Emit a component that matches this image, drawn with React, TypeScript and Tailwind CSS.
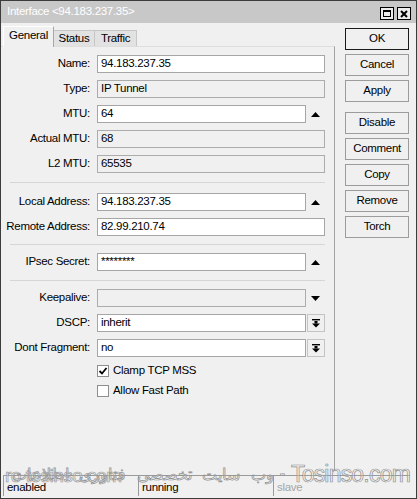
import React from "react";

const ui = "font-['Liberation_Sans',Arial,sans-serif]";

function Field({
  label,
  value,
  disabled,
  short,
  suffix,
}: {
  label: string;
  value?: string;
  disabled?: boolean;
  short?: boolean;
  suffix?: React.ReactNode;
}) {
  return (
    <div className="flex items-center h-[18px]">
      <div className="w-[90px] text-right pr-px leading-none whitespace-nowrap">{label}</div>
      <div
        className={`ml-[6px] h-[18px] border flex items-center px-[3px] leading-none whitespace-nowrap ${
          short ? "w-[209px]" : "w-[228px]"
        } ${disabled ? "bg-[#f0f0f0] border-[#acacac]" : "bg-white border-[#a6a6a6]"}`}
      >
        {value}
      </div>
      {suffix}
    </div>
  );
}

function UpArrow() {
  return (
    <svg width="19" height="18" viewBox="0 0 19 18" className="shrink-0">
      <polygon points="5,12 14,12 9.5,7" fill="#000" />
    </svg>
  );
}

function DownArrow() {
  return (
    <svg width="19" height="18" viewBox="0 0 19 18" className="shrink-0">
      <polygon points="5,7 14,7 9.5,12" fill="#000" />
    </svg>
  );
}

function DropButton() {
  return (
    <div className="ml-px w-[18px] h-[18px] border border-[#c4c4c4] bg-[#f0f0f0] flex items-center justify-center shrink-0">
      <svg width="10" height="10" viewBox="0 0 10 10">
        <rect x="1" y="1" width="8" height="1.4" fill="#000" />
        <rect x="3.5" y="3" width="3" height="2.5" fill="#000" />
        <polygon points="1,5.5 9,5.5 5,9.5" fill="#000" />
      </svg>
    </div>
  );
}

function Separator({ top, bottom }: { top: string; bottom: string }) {
  return <div className={`ml-[9px] w-[315px] h-px bg-[#d6d6d6] ${top} ${bottom}`} />;
}

function Check({ label, checked }: { label: string; checked?: boolean }) {
  return (
    <div className="flex items-center h-[12px] pl-[96px]">
      <div className="w-[12px] h-[12px] border border-[#8f8f8f] bg-white flex items-center justify-center">
        {checked && (
          <svg width="10" height="10" viewBox="0 0 10 10">
            <polyline points="1.5,5 4,7.5 8.5,2" fill="none" stroke="#000" strokeWidth="1.8" />
          </svg>
        )}
      </div>
      <span className="ml-[4px] leading-none">{label}</span>
    </div>
  );
}

function Btn({ label, strong }: { label: string; strong?: boolean }) {
  return (
    <div
      className={`w-[64px] h-[22px] flex items-center justify-center border bg-[#f0f0f0] leading-none ${
        strong ? "border-[#1a1a1a]" : "border-[#9c9c9c]"
      }`}
    >
      {label}
    </div>
  );
}

export default function App() {
  return (
    <div
      className={`${ui} text-[11.5px] tracking-[-0.3px] text-black w-[417px] h-[499px] bg-[#f0f0f0] border border-[#3c3c3c] flex flex-col relative overflow-hidden`}
    >
      {/* Title bar */}
      <div className="h-[22px] bg-[#c8c8c8] flex items-center pl-[6px] pr-[5px] shrink-0">
        <span className="text-white text-[11.5px] leading-none">Interface &lt;94.183.237.35&gt;</span>
        <div className="ml-auto flex gap-[3px] mt-[3px]">
          <div className="w-[14px] h-[13px] border border-black bg-[#ededed] flex items-center justify-center">
            <div className="w-[8px] h-[7px] border border-black border-t-2" />
          </div>
          <div className="w-[14px] h-[13px] border border-black bg-[#ededed] flex items-center justify-center">
            <svg width="8" height="8" viewBox="0 0 8 8">
              <path d="M1 1L7 7M7 1L1 7" stroke="#000" strokeWidth="2" />
            </svg>
          </div>
        </div>
      </div>

      {/* Main area */}
      <div className="flex h-[447px] shrink-0">
        <div className="w-[334px] flex flex-col">
          {/* Tabs */}
          <div className="flex items-end pl-[2px] mt-[3px] h-[20px]">
            <div className="h-[21px] w-[51px] flex items-center justify-center border-t border-l border-r border-t-white border-l-white border-r-[#a8a8a8] bg-[#f0f0f0] relative z-10 -mb-px pb-[2px]">
              General
            </div>
            <div className="h-[16px] w-[41px] flex items-center justify-center border-t border-r border-[#c6c6c6] bg-[#e2e2e2] leading-none">
              Status
            </div>
            <div className="h-[16px] w-[42px] flex items-center justify-center border-t border-r border-[#c6c6c6] bg-[#e2e2e2] leading-none">
              Traffic
            </div>
          </div>

          {/* Panel */}
          <div className="flex-1 border-t border-r border-t-[#dedede] border-r-[#a4a4a4] pt-[8px] flex flex-col">
            <div className="flex flex-col gap-[7px]">
              <Field label="Name:" value="94.183.237.35" />
              <Field label="Type:" value="IP Tunnel" disabled />
              <Field label="MTU:" value="64" short suffix={<UpArrow />} />
              <Field label="Actual MTU:" value="68" disabled />
              <Field label="L2 MTU:" value="65535" disabled />
            </div>
            <Separator top="mt-[9px]" bottom="mb-[10px]" />
            <div className="flex flex-col gap-[7px]">
              <Field label="Local Address:" value="94.183.237.35" short suffix={<UpArrow />} />
              <Field label="Remote Address:" value="82.99.210.74" />
            </div>
            <Separator top="mt-[8px]" bottom="mb-[8px]" />
            <Field label="IPsec Secret:" value="********" short suffix={<UpArrow />} />
            <Separator top="mt-[9px]" bottom="mb-[8px]" />
            <div className="flex flex-col gap-[7px]">
              <Field label="Keepalive:" disabled short suffix={<DownArrow />} />
              <Field label="DSCP:" value="inherit" short suffix={<DropButton />} />
              <Field label="Dont Fragment:" value="no" short suffix={<DropButton />} />
            </div>
            <div className="flex flex-col gap-[8px] mt-[8px]">
              <Check label="Clamp TCP MSS" checked />
              <Check label="Allow Fast Path" />
            </div>
          </div>
        </div>

        {/* Buttons */}
        <div className="flex-1 pl-[10px] pt-[5px] flex flex-col">
          <div className="flex flex-col gap-[4px]">
            <Btn label="OK" strong />
            <Btn label="Cancel" />
            <Btn label="Apply" />
          </div>
          <div className="flex flex-col gap-[4px] mt-[10px]">
            <Btn label="Disable" />
            <Btn label="Comment" />
            <Btn label="Copy" />
            <Btn label="Remove" />
            <Btn label="Torch" />
          </div>
        </div>
      </div>

      {/* Status bar */}
      <div className="mt-[5px] flex pl-[2px] h-[21px]">
        <div className="w-[135px] border-t border-l border-[#9a9a9a] flex items-end pl-[3px] pb-[3px] leading-none">
          enabled
        </div>
        <div className="w-[135px] border-t border-l border-[#9a9a9a] flex items-end pl-[3px] pb-[3px] leading-none">
          running
        </div>
        <div className="w-[137px] border-t border-l border-[#9a9a9a] flex items-end pl-[3px] pb-[3px] leading-none text-[#a6a6a6]">
          slave
        </div>
      </div>

      {/* Watermark */}
      <div className="absolute left-[4px] top-[465px] text-[19px] tracking-[-0.5px] leading-none text-white/30 [-webkit-text-stroke:0.7px_#9a9a9a] pointer-events-none">
        ro tosinso.com
      </div>
      <div
        dir="ltr"
        className="absolute right-[6px] top-[462px] flex items-end whitespace-nowrap leading-none tracking-normal text-white/30 [-webkit-text-stroke:0.7px_#909090] pointer-events-none"
      >
        <span className="text-[16px] mb-[3px] [word-spacing:6px]">وب سایت تخصصی فناوری اطلاعات</span>
        <span className="text-[16px] mb-[4px] mx-[6px]">-</span>
        <span className="text-[23px] tracking-[-0.8px]">Tosinso.com</span>
      </div>
    </div>
  );
}
